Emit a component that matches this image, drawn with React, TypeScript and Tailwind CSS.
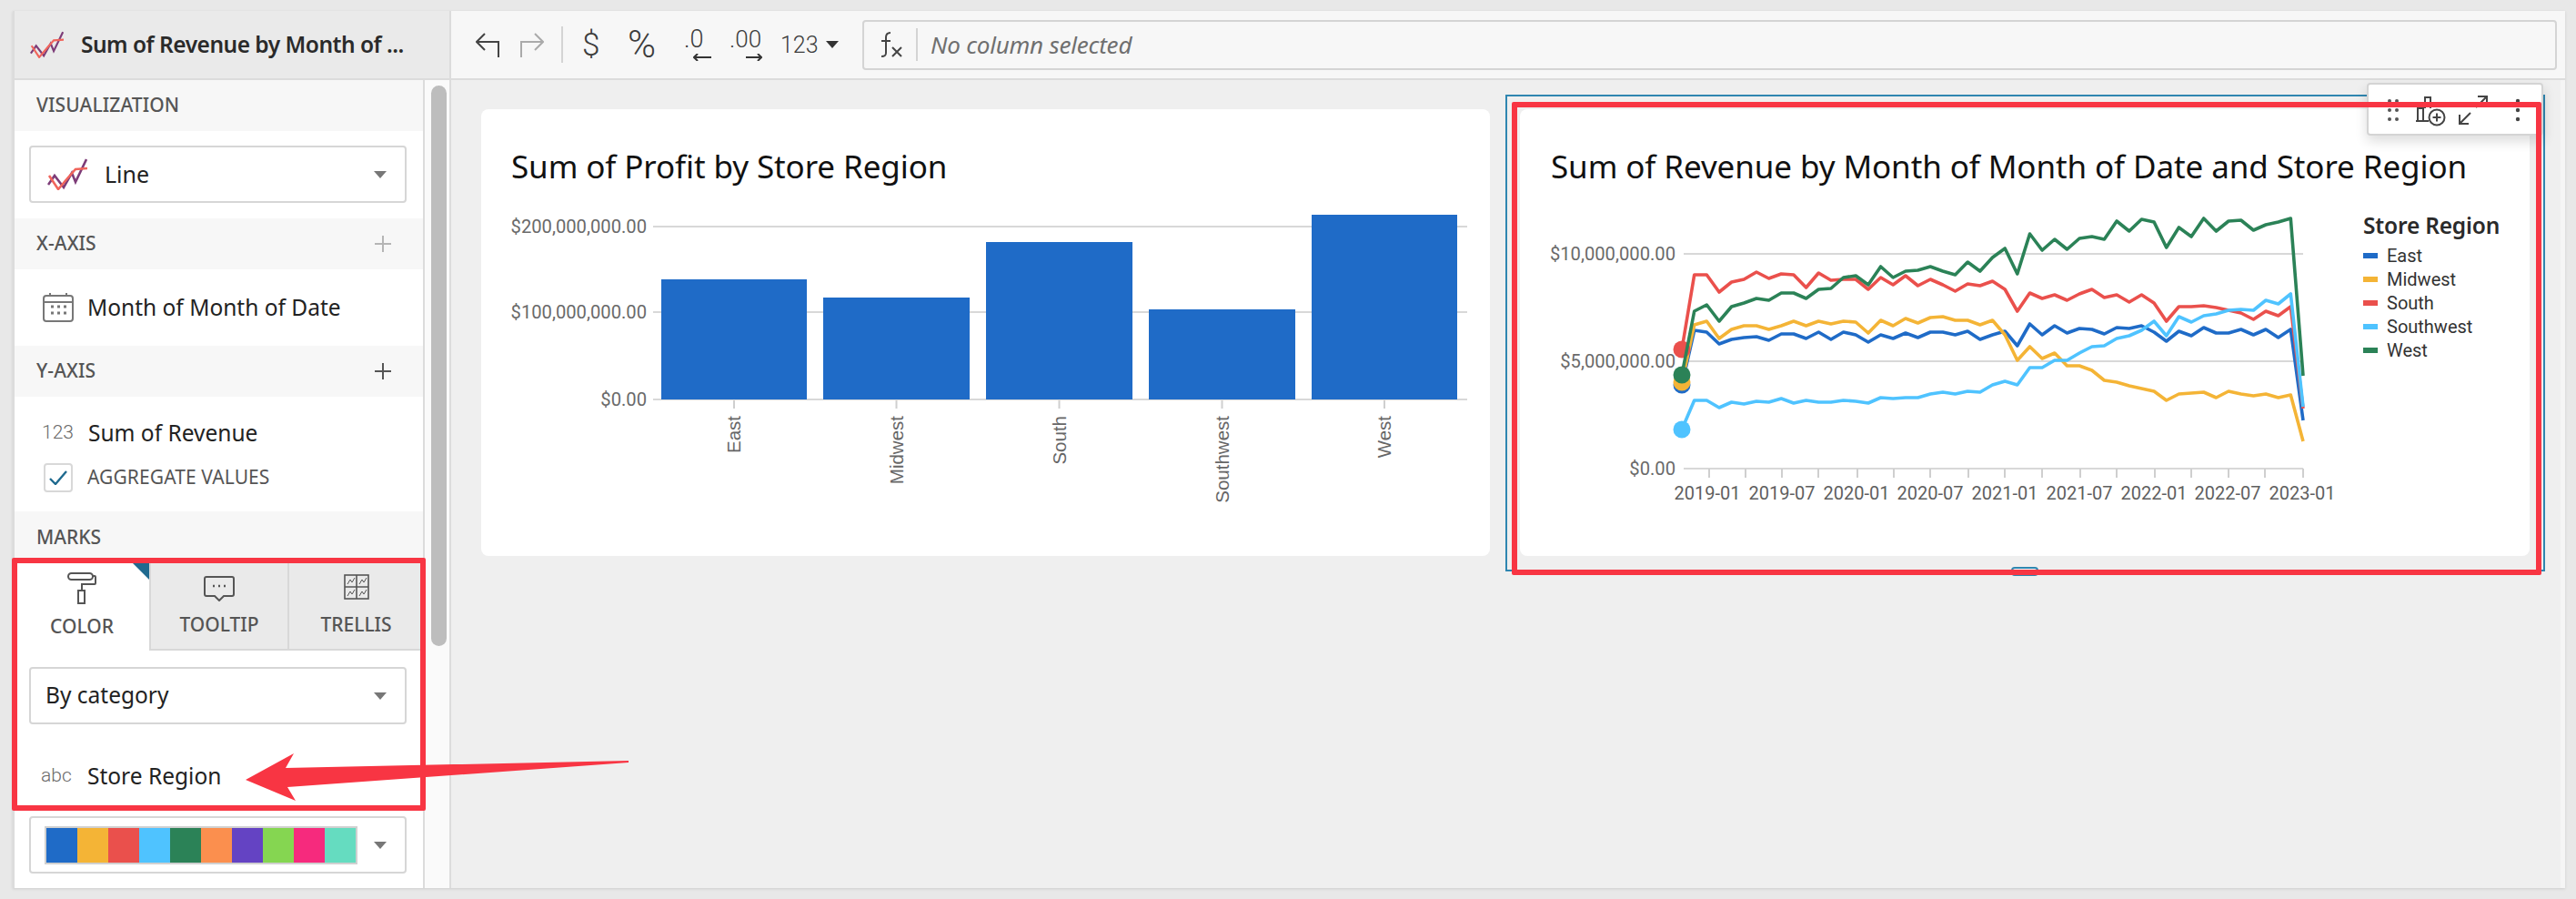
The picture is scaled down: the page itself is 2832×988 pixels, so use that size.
import React from "react";

const x = (i: number) => 1849 + 13.66 * i;
const series: { c: string; y: number[] }[] = [
  { c: "#1f6bc7", y: [423,363,365,378,373,371,370,374,367,367,372,365,373,365,368,376,368,372,366,371,365,365,368,364,373,368,364,380,356,368,358,366,361,362,367,360,361,358,365,375,364,369,360,366,366,362,368,362,371,362,462] },
  { c: "#f4b436", y: [420,357,353,372,362,358,358,362,358,353,358,353,356,353,354,366,352,358,350,355,349,348,352,352,357,352,368,396,381,394,388,402,402,407,418,420,424,427,430,440,433,432,431,437,430,433,435,433,437,434,485] },
  { c: "#ea504c", y: [384,302,302,321,310,307,299,306,301,302,316,300,308,307,307,318,305,313,303,314,307,313,320,312,314,309,318,342,322,328,324,330,323,318,327,324,332,324,333,353,337,337,336,338,341,344,351,342,347,337,449] },
  { c: "#4fc3ff", y: [472,440,440,448,442,444,441,442,438,443,440,442,442,440,441,443,437,438,437,437,433,431,433,430,431,423,419,423,404,404,396,396,388,381,380,372,369,363,353,369,348,354,347,345,341,340,341,330,334,323,447] },
  { c: "#2b8257", y: [412,342,335,353,337,333,328,330,322,322,328,318,317,305,303,313,293,305,298,297,293,298,302,288,298,283,273,301,257,275,263,274,262,260,263,243,254,241,244,272,250,260,240,254,243,242,253,247,244,240,413] },
];
const ticks = [1879,1919,1959,1999,2042,2082,2122,2164,2204,2245,2287,2327,2369,2409,2450,2490,2532];
const xLabels: [number, string][] = [[1877,"2019-01"],[1959,"2019-07"],[2041,"2020-01"],[2122,"2020-07"],[2204,"2021-01"],[2286,"2021-07"],[2368,"2022-01"],[2449,"2022-07"],[2531,"2023-01"]];
const bars: [number, number, number, string][] = [
  [727,887,307,"East"],[905,1066,327,"Midwest"],[1084,1245,266,"South"],[1263,1424,340,"Southwest"],[1442,1602,236,"West"],
];
const palette = ["#1f6bc7","#f4b436","#ea504c","#4fc3ff","#2b8257","#fb8f4e","#6443c3","#85d651","#f62a7d","#65dcc0"];
const legend: [string, string][] = [["#1f6bc7","East"],["#f4b436","Midwest"],["#ea504c","South"],["#4fc3ff","Southwest"],["#2b8257","West"]];

const LineIcon = ({ w, h }: { w: number; h: number }) => (
  <svg className="flex-none" width={w} height={h} viewBox="0 0 44 35" fill="none" strokeWidth="2.6">
    <path d="M1 29 L8 19 L18 32 L27 16 L31 26 L43 1" stroke="#7d3c78" />
    <path d="M2 19 L12 34 L23 21 L31 12 L44 11" stroke="#f0655c" />
  </svg>
);
const Caret = ({ c = "#777" }: { c?: string }) => (
  <svg width="14" height="8" viewBox="0 0 14 8"><path d="M0 0H14L7 8Z" fill={c} /></svg>
);
const Plus = ({ c }: { c: string }) => (
  <svg width="18" height="18" viewBox="0 0 18 18" stroke={c} strokeWidth="2"><path d="M9 0V18M0 9H18" /></svg>
);
const Header = ({ label, plus }: { label: string; plus?: string }) => (
  <div className="flex h-[56px] items-center justify-between bg-[#f7f7f7] pl-[24px] pr-[35px] text-[21px] font-medium tracking-[0.1px] text-[#555555]">
    <span>{label}</span>
    {plus && <Plus c={plus} />}
  </div>
);
const Select = ({ children }: { children: React.ReactNode }) => (
  <div className="flex h-[63px] w-[415px] items-center justify-between rounded-[4px] border-2 border-[#d6d6d6] bg-white pr-[20px]">
    {children}
    <span className="flex"><Caret /></span>
  </div>
);

function Toolbar() {
  return (
    <div className="flex h-full flex-1 items-center bg-[#f7f7f7] pl-[27px] pr-[9px] text-[#3c3c3c]">
      <svg className="flex-none" width="26" height="27" viewBox="0 0 26 27" fill="none" stroke="#444" strokeWidth="2"><path d="M10 1 L1 10 L10 19 M1 10 H25 V27" /></svg>
      <svg className="ml-[23px] flex-none" width="26" height="27" viewBox="0 0 26 27" fill="none" stroke="#aaa" strokeWidth="2"><path d="M16 1 L25 10 L16 19 M25 10 H1 V27" /></svg>
      <div className="ml-[19px] h-[40px] w-[2px] bg-[#d4d4d4]" />
      <span className="ml-[21px] w-[20px] font-['Roboto'] text-[35px] font-light leading-none">$</span>
      <span className="ml-[30px] w-[33px] font-['Roboto'] text-[42px] font-light leading-none">%</span>
      <div className="relative ml-[29px] h-[36px] w-[30px]">
        <span className="absolute left-0 top-[-1px] font-['Roboto'] text-[27px] font-light leading-none">.0</span>
        <svg className="absolute left-[10px] top-[28px]" width="20" height="8" viewBox="0 0 20 8" fill="none" stroke="#333" strokeWidth="2"><path d="M20 4H1M5 0L1 4L5 8" /></svg>
      </div>
      <div className="relative ml-[20px] h-[36px] w-[36px]">
        <span className="absolute left-0 top-[-1px] font-['Roboto'] text-[26px] font-light leading-none">.00</span>
        <svg className="absolute left-[18px] top-[28px]" width="18" height="8" viewBox="0 0 18 8" fill="none" stroke="#333" strokeWidth="2"><path d="M0 4H17M13 0L17 4L13 8" /></svg>
      </div>
      <span className="ml-[20px] w-[44px] font-['Roboto'] text-[25px] font-light leading-none">123</span>
      <span className="ml-[6px] flex"><Caret c="#333" /></span>
      <div className="ml-[26px] flex h-[55px] flex-1 items-center rounded-[4px] border-2 border-[#d4d4d4]">
        <svg className="ml-[18px] flex-none" width="24" height="28" viewBox="0 0 24 28" fill="none" stroke="#444" strokeWidth="2"><path d="M11 1 C7 1 6 3 6 6 V23 C6 26 5 27 1 27 M1 10H11 M13 17L23 27M23 17L13 27" /></svg>
        <div className="ml-[15px] h-[36px] w-[2px] bg-[#d4d4d4]" />
        <span className="ml-[14px] text-[26px] italic tracking-[-0.2px] text-[#6f6f6f]">No column selected</span>
      </div>
    </div>
  );
}

function Sidebar() {
  return (
    <div className="flex h-full w-[480px] flex-none">
      <div className="flex h-full w-[451px] flex-col border-r-2 border-[#dcdcdc] bg-white">
        <Header label="VISUALIZATION" />
        <div className="px-[16px] pb-[17px] pt-[16px]">
          <Select>
            <div className="flex items-center">
              <span className="ml-[18px] flex"><LineIcon w={44} h={35} /></span>
              <span className="ml-[19px] text-[25px] text-[#222]">Line</span>
            </div>
          </Select>
        </div>
        <Header label="X-AXIS" plus="#b5b5b5" />
        <div className="flex h-[84px] items-center pl-[31px]">
          <svg className="flex-none" width="34" height="32" viewBox="0 0 34 32" fill="none" stroke="#777" strokeWidth="2">
            <rect x="1" y="3" width="32" height="28" rx="3" />
            <path d="M1 10H33M8 0V4M26 0V4" />
            <path d="M9 15h3M16 15h3M23 15h3M9 22h3M16 22h3M23 22h3" strokeWidth="3" />
          </svg>
          <span className="ml-[15px] text-[24.5px] text-[#222]">Month of Month of Date</span>
        </div>
        <Header label="Y-AXIS" plus="#555" />
        <div className="h-[126px] pl-[30px] pt-[21px]">
          <div className="flex h-[38px] items-center">
            <span className="w-[51px] font-['Roboto'] text-[21px] font-light text-[#6a6a6a]">123</span>
            <span className="text-[24.5px] text-[#222]">Sum of Revenue</span>
          </div>
          <div className="mt-[14px] flex items-center pl-[2px]">
            <div className="flex h-[32px] w-[32px] items-center justify-center rounded-[4px] border-2 border-[#d8d8d8]">
              <svg width="20" height="16" viewBox="0 0 20 16" fill="none" stroke="#1f6a8f" strokeWidth="2.4"><path d="M1 9L7 15L19 1" /></svg>
            </div>
            <span className="ml-[16px] text-[21px] tracking-[0.1px] text-[#555]">AGGREGATE VALUES</span>
          </div>
        </div>
        <div className="flex h-[57px] items-center bg-[#f7f7f7] pl-[24px] text-[21px] font-medium text-[#555]">MARKS</div>
        <div className="flex h-[96px]">
          <div className="relative flex w-[148px] flex-col items-center bg-white pt-[10px]">
            <svg width="32" height="35" viewBox="0 0 32 35" fill="none" stroke="#555" strokeWidth="2">
              <rect x="1" y="1" width="27" height="7" rx="3.5" />
              <path d="M28 4h2a1 1 0 0 1 1 1v7a1 1 0 0 1-1 1H16v6" />
              <rect x="12" y="20" width="7" height="14" />
            </svg>
            <span className="mt-[9px] text-[21px] font-medium text-[#555]">COLOR</span>
            <div className="absolute right-0 top-0 h-0 w-0 border-l-[18px] border-t-[18px] border-l-transparent border-t-[#1f6a8f]" />
          </div>
          <div className="flex w-[152px] flex-col items-center border-b-2 border-l-2 border-[#d8d8d8] bg-[#eaeaea] pt-[14px]">
            <svg width="34" height="28" viewBox="0 0 34 28" fill="none" stroke="#555" strokeWidth="2">
              <path d="M3 1H31a2 2 0 0 1 2 2V20a2 2 0 0 1-2 2H22L17 27L12 22H3a2 2 0 0 1-2-2V3a2 2 0 0 1 2-2Z" />
              <path d="M10 11h2M16 11h2M22 11h2" strokeWidth="2.6" />
            </svg>
            <span className="mt-[10px] text-[21px] font-medium text-[#555]">TOOLTIP</span>
          </div>
          <div className="flex flex-1 flex-col items-center border-b-2 border-l-2 border-[#d8d8d8] bg-[#eaeaea] pt-[12px]">
            <svg width="28" height="28" viewBox="0 0 28 28" fill="none" stroke="#555" strokeWidth="1.6">
              <rect x="1" y="1" width="26" height="26" />
              <path d="M14 1V27M1 14H27" />
              <path d="M4 11L7 6L9 9L12 4M17 11L20 6L22 9L25 4M4 24L7 19L9 22L12 17M17 24L20 19L22 22L25 17" strokeWidth="1" />
            </svg>
            <span className="mt-[12px] text-[21px] font-medium text-[#555]">TRELLIS</span>
          </div>
        </div>
        <div className="flex-1 px-[16px] pt-[18px]">
          <Select><span className="ml-[16px] text-[24.5px] text-[#222]">By category</span></Select>
          <div className="mt-[41px] flex h-[32px] items-center pl-[13px]">
            <span className="w-[51px] font-['Roboto'] text-[21px] font-light text-[#6a6a6a]">abc</span>
            <span className="text-[24.5px] text-[#222]">Store Region</span>
          </div>
          <div className="mt-[28px]">
            <Select>
              <div className="ml-[15px] flex border-2 border-[#d0d0d0]">
                {palette.map((c) => <span key={c} className="h-[38px] w-[34px]" style={{ background: c }} />)}
              </div>
            </Select>
          </div>
        </div>
      </div>
      <div className="relative flex-1 border-r-2 border-[#dcdcdc] bg-[#fafafa]">
        <div className="ml-[7px] mt-[6px] h-[616px] w-[17px] rounded-full bg-[#bdbdbd]" />
      </div>
    </div>
  );
}

function BarChart() {
  return (
    <svg className="block" width="1109" height="405" viewBox="529 206 1109 405">
      {[[249,"$200,000,000.00"],[343,"$100,000,000.00"],[439,"$0.00"]].map(([y, t]) => (
        <g key={t as string}>
          <line x1="718" x2="1613" y1={y as number} y2={y as number} stroke="#d8d8d8" strokeWidth="2" />
          <text x="711" y={(y as number) + 7} textAnchor="end" fontFamily="Roboto" fontSize="20.2" fill="#6a6a6a">{t}</text>
        </g>
      ))}
      {bars.map(([a, b, top, name]) => (
        <g key={name}>
          <rect x={a} y={top} width={b - a} height={439 - top} fill="#1f6bc7" />
          <line x1={(a + b) / 2} x2={(a + b) / 2} y1="440" y2="449" stroke="#cfcfcf" strokeWidth="2" />
          <text transform={`translate(${(a + b) / 2 + 7} 457) rotate(-90)`} textAnchor="end" fontFamily="'Liberation Sans'" fontSize="20.5" fill="#666">{name}</text>
        </g>
      ))}
    </svg>
  );
}

function LineChart() {
  return (
    <svg className="block flex-none" width="910" height="405" viewBox="1671 206 910 405">
      {[[279,"$10,000,000.00"],[397,"$5,000,000.00"],[515,"$0.00"]].map(([y, t]) => (
        <g key={t as string}>
          <line x1="1851" x2="2532" y1={y as number} y2={y as number} stroke="#d8d8d8" strokeWidth="2" />
          <text x="1842" y={(y as number) + 7} textAnchor="end" fontFamily="Roboto" fontSize="20.2" fill="#6a6a6a">{t}</text>
        </g>
      ))}
      {ticks.map((t) => <line key={t} x1={t} x2={t} y1="515" y2="525" stroke="#cfcfcf" strokeWidth="2" />)}
      {xLabels.map(([t, l]) => (
        <text key={l} x={t} y="549" textAnchor="middle" fontFamily="Roboto" fontSize="20" fill="#5f5f5f">{l}</text>
      ))}
      {series.map((s) => (
        <g key={s.c}>
          <polyline points={s.y.map((v, i) => `${x(i).toFixed(1)},${v}`).join(" ")} fill="none" stroke={s.c} strokeWidth="3.6" strokeLinejoin="round" />
          <circle cx="1849" cy={s.y[0]} r="9.5" fill={s.c} />
        </g>
      ))}
    </svg>
  );
}

export default function App() {
  return (
    <div className="relative h-[988px] w-[2832px] overflow-hidden bg-[#e8e8e8] pl-[14px] pt-[12px] font-['Noto_Sans',sans-serif]">
      <div className="flex h-[964px] w-[2806px] flex-col border-l-2 border-[#dcdcdc] shadow-[0_1px_3px_rgba(0,0,0,0.12)]">
        <div className="flex h-[76px] flex-none border-b-2 border-[#dcdcdc]">
          <div className="flex w-[480px] flex-none items-center border-r-2 border-[#dcdcdc] bg-[#eaeaea] pl-[17px]">
            <LineIcon w={37} h={30} />
            <span className="ml-[19px] whitespace-nowrap text-[24.5px] font-semibold tracking-[-0.5px] text-[#2a2a2a]">Sum of Revenue by Month of ...</span>
          </div>
          <Toolbar />
        </div>
        <div className="flex min-h-0 flex-1">
          <Sidebar />
          <div className="flex flex-1 gap-[33px] border-r-[5px] border-[#f5f5f5] bg-[#efefef] pl-[33px] pt-[32px]">
            <div className="h-[491px] w-[1109px] flex-none rounded-[8px] bg-white">
              <div className="h-[86px] pl-[33px] pt-[40px] text-[35px] leading-[46px] tracking-[-0.1px] text-[#111]">Sum of Profit by Store Region</div>
              <BarChart />
            </div>
            <div className="h-[491px] w-[1110px] flex-none rounded-[8px] bg-white">
              <div className="h-[86px] pl-[34px] pt-[40px] text-[35px] leading-[46px] tracking-[-0.1px] text-[#111] whitespace-nowrap">Sum of Revenue by Month of Month of Date and Store Region</div>
              <div className="flex">
                <LineChart />
                <div className="ml-[17px] pt-[27px] font-['Roboto'] text-[20px] text-[#333]">
                  <div className="mb-[5px] whitespace-nowrap font-['Noto_Sans'] text-[24.5px] font-semibold leading-[30px] tracking-[-0.2px] text-[#2a2a2a]">Store Region</div>
                  {legend.map(([c, l]) => (
                    <div key={l} className="flex h-[26px] items-center">
                      <span className="h-[6px] w-[16px]" style={{ background: c }} />
                      <span className="ml-[10px]">{l}</span>
                    </div>
                  ))}
                </div>
              </div>
            </div>
          </div>
        </div>
      </div>

      {/* selection outline on the second tile */}
      <div className="absolute left-[1655px] top-[104px] h-[524px] w-[1143px] border-2 border-[#2f86b0]" />
      <div className="absolute left-[2211px] top-[623px] h-[10px] w-[30px] rounded-[4px] border-2 border-[#2f86b0] bg-white" />

      {/* floating tile toolbar */}
      <div className="absolute left-[2602px] top-[91px] flex h-[58px] w-[194px] items-center rounded-[4px] border-2 border-[#d4d4d4] bg-white shadow-[0_6px_14px_rgba(0,0,0,0.14)]">
        <svg className="absolute left-[21px] top-[15px]" width="12" height="28" viewBox="0 0 12 28" fill="#555"><circle cx="2" cy="3" r="2" /><circle cx="10" cy="3" r="2" /><circle cx="2" cy="13" r="2" /><circle cx="10" cy="13" r="2" /><circle cx="2" cy="23" r="2" /><circle cx="10" cy="23" r="2" /></svg>
        <svg className="absolute left-[51px] top-[12px]" width="34" height="34" viewBox="0 0 34 34" fill="none" stroke="#444" strokeWidth="2">
          <path d="M1 28H15M3 28V14H9V28M11 14V2H17V14" />
          <circle cx="24" cy="24" r="8.5" />
          <path d="M24 19.5V28.5M19.5 24H28.5" />
        </svg>
        <svg className="absolute left-[99px] top-[12px]" width="32" height="32" viewBox="0 0 32 32" fill="none" stroke="#444" strokeWidth="2">
          <path d="M21 1H31V11M31 1L19 13M11 31H1V21M1 31L13 19" />
        </svg>
        <svg className="absolute left-[161px] top-[15px]" width="6" height="28" viewBox="0 0 6 28" fill="#444"><circle cx="3" cy="3" r="2.2" /><circle cx="3" cy="13" r="2.2" /><circle cx="3" cy="23" r="2.2" /></svg>
      </div>

      {/* red annotations */}
      <div className="absolute left-[13px] top-[613px] h-[278px] w-[455px] rounded-[2px] border-[6px] border-[#f83543]" />
      <div className="absolute left-[1662px] top-[112px] h-[520px] w-[1132px] rounded-[2px] border-[6px] border-[#f83543]" />
      <svg className="absolute left-0 top-0" width="720" height="900" viewBox="0 0 720 900" fill="#f83543">
        <path d="M270 857 L323 828 L314 844 L691 836 L691 838 L316 865 L325 880 Z" />
      </svg>
    </div>
  );
}
